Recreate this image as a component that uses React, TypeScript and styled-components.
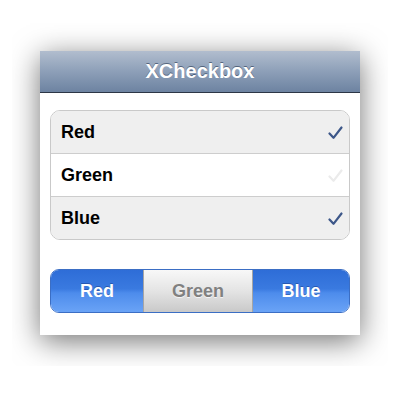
import React from "react";
import styled, { createGlobalStyle } from "styled-components";

const Global = createGlobalStyle`
  html, body { margin: 0; padding: 0; background: #ffffff; }
  body { font-family: "Liberation Sans", Arial, sans-serif; }
`;

const Stage = styled.div`
  padding: 23px 12px;
  width: 376px;
`;

const Clip = styled.div`
  overflow: hidden;
  padding: 28px 28px 31px;
`;

const Window = styled.div`
  width: 320px;
  height: 284px;
  background: #ffffff;
  box-shadow: 0 6px 28px rgba(0, 0, 0, 0.55);
  display: flex;
  flex-direction: column;
`;

const NavBar = styled.div`
  height: 41px;
  border-bottom: 1px solid #2c3646;
  background: linear-gradient(#b1bdce, #8d9fb8 50%, #6d83a1);
  display: flex;
  align-items: center;
  justify-content: center;
  color: #ffffff;
  font-size: 20px;
  font-weight: bold;
  text-shadow: 0 -1px 0 rgba(40, 55, 80, 0.6);
`;

const Content = styled.div`
  padding: 17px 10px 0;
  display: flex;
  flex-direction: column;
  gap: 29px;
`;

const List = styled.div`
  border: 1px solid #c9c9c9;
  border-radius: 10px;
  overflow: hidden;
  display: flex;
  flex-direction: column;
`;

const Row = styled.div<{ $checked: boolean }>`
  height: 42px;
  display: flex;
  align-items: center;
  justify-content: space-between;
  padding: 0 6px 0 10px;
  background: ${(p) => (p.$checked ? "#efefef" : "#ffffff")};
  font-size: 18px;
  font-weight: bold;
  color: #000000;
  & + & {
    border-top: 1px solid #cdcdcd;
  }
`;

const Check = ({ on }: { on: boolean }) => (
  <svg width="15" height="14" viewBox="0 0 15 14" style={{ marginTop: 2 }}>
    <path
      d="M1.5 7.5 L5.5 11.8 L13.5 1.5"
      fill="none"
      stroke={on ? "#3d5789" : "#ebebeb"}
      strokeWidth="2.2"
      strokeLinecap="round"
      strokeLinejoin="round"
    />
  </svg>
);

const Segmented = styled.div`
  display: flex;
  height: 44px;
  border-radius: 9px;
  overflow: hidden;
  border: 1px solid #3b6ec4;
  box-sizing: border-box;
`;

const Segment = styled.div<{ $on: boolean; $w: number }>`
  width: ${(p) => p.$w}px;
  display: flex;
  align-items: center;
  justify-content: center;
  font-size: 18px;
  font-weight: bold;
  box-sizing: border-box;
  color: ${(p) => (p.$on ? "#ffffff" : "#808080")};
  text-shadow: ${(p) =>
    p.$on ? "0 -1px 0 rgba(20, 50, 120, 0.45)" : "0 1px 0 rgba(255,255,255,0.7)"};
  background: ${(p) =>
    p.$on
      ? "linear-gradient(#2e6dd7, #3a7ae0 45%, #4d8cec 55%, #6aa3f6)"
      : "linear-gradient(#f8f8f8, #e4e4e4 50%, #c9c9c9)"};
  ${(p) =>
    p.$on
      ? ""
      : "border-left: 1px solid #a5a5a5; border-right: 1px solid #a5a5a5; margin: -1px 0; border-top: 1px solid #a5a5a5; border-bottom: 1px solid #a5a5a5;"}
`;

const items = [
  { name: "Red", on: true },
  { name: "Green", on: false },
  { name: "Blue", on: true },
];

const widths = [92, 110, 96];

export default function App() {
  return (
    <>
      <Global />
      <Stage>
        <Clip>
          <Window>
            <NavBar>XCheckbox</NavBar>
            <Content>
              <List>
                {items.map((it) => (
                  <Row key={it.name} $checked={it.on}>
                    <span>{it.name}</span>
                    <Check on={it.on} />
                  </Row>
                ))}
              </List>
              <Segmented>
                {items.map((it, i) => (
                  <Segment key={it.name} $on={it.on} $w={widths[i]}>
                    {it.name}
                  </Segment>
                ))}
              </Segmented>
            </Content>
          </Window>
        </Clip>
      </Stage>
    </>
  );
}
